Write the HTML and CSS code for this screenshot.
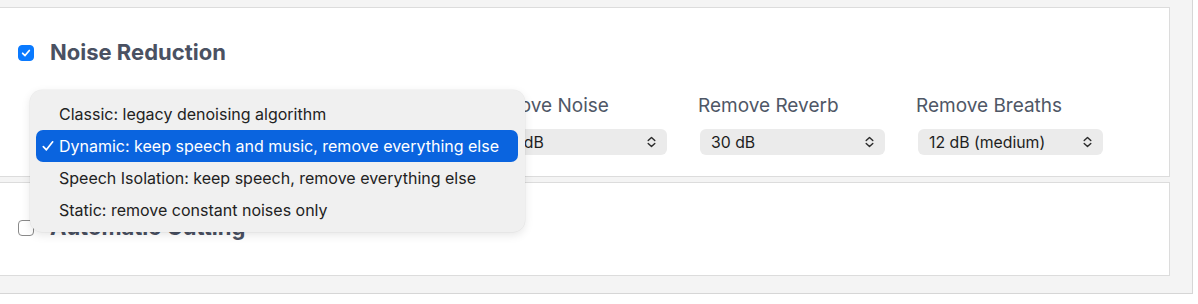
FILE: index.html
```html
<!DOCTYPE html>
<html lang="en">
<head>
<meta charset="utf-8">
<title>Audio settings</title>
<link rel="stylesheet" href="styles.css">
</head>
<body>
<div class="panel">
  <section class="card">
    <div class="card-head">
      <span class="checkbox checked">
        <svg viewBox="0 0 16 16" width="16" height="16"><path d="M4.2 8.3 L6.9 10.9 L11.8 5.2" fill="none" stroke="#fff" stroke-width="2" stroke-linecap="round" stroke-linejoin="round"/></svg>
      </span>
      <h2 class="card-title">Noise Reduction</h2>
    </div>
    <div class="fields">
      <div class="field field-wide">
        <div class="label label-empty"></div>
        <div class="select" aria-label="Noise reduction model"></div>
        <div class="menu">
          <div class="menu-item">Classic: legacy denoising algorithm</div>
          <div class="menu-item selected">
            <svg class="tick" viewBox="0 0 12 12" width="12" height="12"><path d="M1.3 6.6 L4.4 9.8 L10.7 1.8" fill="none" stroke="#fff" stroke-width="1.7" stroke-linecap="round" stroke-linejoin="round"/></svg>
            Dynamic: keep speech and music, remove everything else
          </div>
          <div class="menu-item">Speech Isolation: keep speech, remove everything else</div>
          <div class="menu-item">Static: remove constant noises only</div>
        </div>
      </div>
      <div class="field">
        <div class="label">Remove Noise</div>
        <div class="select"><span>100 dB</span>
          <svg class="chev" viewBox="0 0 9 12" width="9" height="12"><path d="M1.2 4.6 L4.5 1.4 L7.8 4.6 M1.2 7.4 L4.5 10.6 L7.8 7.4" fill="none" stroke="#2b2b2b" stroke-width="1.4" stroke-linecap="round" stroke-linejoin="round"/></svg>
        </div>
      </div>
      <div class="field">
        <div class="label">Remove Reverb</div>
        <div class="select"><span>30 dB</span>
          <svg class="chev" viewBox="0 0 9 12" width="9" height="12"><path d="M1.2 4.6 L4.5 1.4 L7.8 4.6 M1.2 7.4 L4.5 10.6 L7.8 7.4" fill="none" stroke="#2b2b2b" stroke-width="1.4" stroke-linecap="round" stroke-linejoin="round"/></svg>
        </div>
      </div>
      <div class="field">
        <div class="label">Remove Breaths</div>
        <div class="select"><span>12 dB (medium)</span>
          <svg class="chev" viewBox="0 0 9 12" width="9" height="12"><path d="M1.2 4.6 L4.5 1.4 L7.8 4.6 M1.2 7.4 L4.5 10.6 L7.8 7.4" fill="none" stroke="#2b2b2b" stroke-width="1.4" stroke-linecap="round" stroke-linejoin="round"/></svg>
        </div>
      </div>
    </div>
  </section>
  <section class="card">
    <div class="card-head">
      <span class="checkbox"></span>
      <h2 class="card-title">Automatic Cutting</h2>
    </div>
  </section>
</div>
</body>
</html>
```

FILE: styles.css
```css
* { box-sizing: border-box; }
html, body { margin: 0; padding: 0; background: #ffffff; }
body { font-family: "Inter", "Liberation Sans", sans-serif; }

.panel {
  width: 1193px;
  background: #f4f4f4;
  border-right: 1px solid #d6d6d6;
  border-bottom: 1px solid #d6d6d6;
  padding: 7px 22px 17px 0;
  display: flex;
  flex-direction: column;
  gap: 5px;
}

.card {
  background: #ffffff;
  border: 1px solid #dcdcdc;
  border-left: 0;
  padding: 29px 0 21px 0;
}

.card-head {
  display: flex;
  align-items: center;
  gap: 16px;
  height: 30px;
  margin-bottom: 12px;
  padding-left: 18px;
}

.checkbox {
  width: 16px;
  height: 16px;
  border-radius: 4px;
  border: 1.5px solid #8a8a8a;
  background: #ffffff;
  display: inline-flex;
  align-items: center;
  justify-content: center;
  flex: none;
  margin-top: 1px;
}
.checkbox.checked {
  background: #0a7aff;
  border-color: #0a7aff;
}
.checkbox svg { display: block; width: 16px; height: 16px; }

.card-title {
  margin: 0;
  font-size: 22px;
  font-weight: 700;
  line-height: 30px;
  color: #4a5162;
  letter-spacing: 0;
}

.fields {
  display: grid;
  grid-template-columns: 403px 185px 185px 185px;
  column-gap: 33px;
  padding: 16px 0 0 46px;
}

.field { position: relative; display: flex; flex-direction: column; gap: 12px; }

.label {
  font-size: 19px;
  line-height: 22px;
  height: 22px;
  color: #4f5766;
  white-space: nowrap;
  margin-left: -2px;
}

.select {
  height: 26px;
  border-radius: 6px;
  background: #ebebeb;
  display: flex;
  align-items: center;
  justify-content: space-between;
  padding: 0 11px 0 11px;
  font-size: 15.8px;
  color: #1e1e1e;
}
.chev { display: block; flex: none; }

.menu {
  position: absolute;
  left: -16px;
  top: -5px;
  width: 495px;
  height: 142px;
  padding: 8px 7px 6px 6px;
  background: #f0f0f0;
  border-radius: 12px;
  box-shadow: 0 3px 10px rgba(0,0,0,0.10), 0 0 0 0.5px rgba(0,0,0,0.06);
  z-index: 5;
}

.menu-item {
  position: relative;
  height: 32px;
  line-height: 32px;
  padding-left: 23px;
  font-size: 16px;
  color: #222222;
  border-radius: 7px;
  white-space: nowrap;
}
.menu-item.selected {
  background: #0a64df;
  color: #ffffff;
}
.tick {
  position: absolute;
  left: 6px;
  top: 10px;
}
```
